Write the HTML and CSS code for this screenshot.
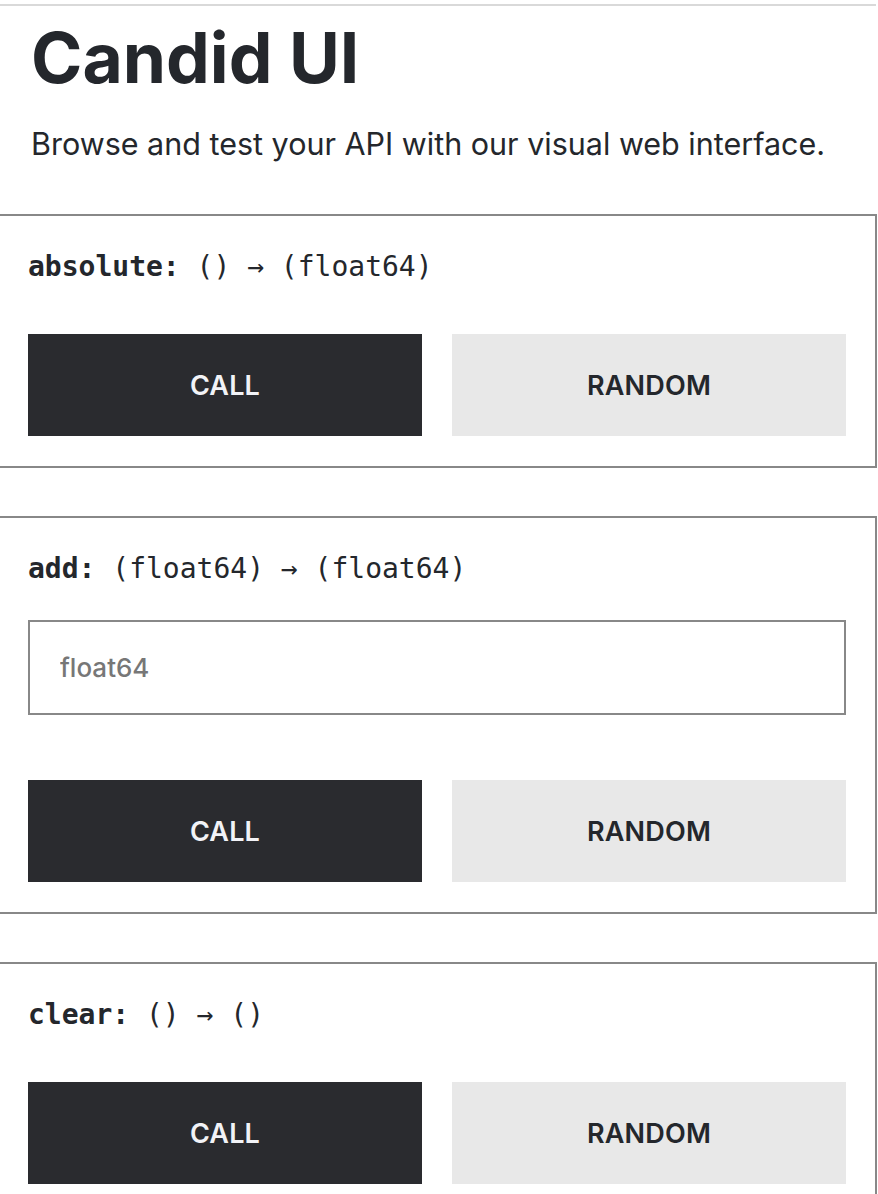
FILE: index.html
```html
<!DOCTYPE html>
<html lang="en">
<head>
<meta charset="utf-8">
<title>Candid UI</title>
<link rel="stylesheet" href="styles.css">
</head>
<body>
<div class="topline"></div>
<header class="header">
  <h1 class="title">Candid UI</h1>
  <p class="subtitle">Browse and test your API with our visual web interface.</p>
</header>
<main class="methods">
  <section class="card">
    <div class="signature"><span class="name">absolute:</span> () → (float64)</div>
    <div class="actions">
      <button class="btn btn-call">CALL</button>
      <button class="btn btn-random">RANDOM</button>
    </div>
  </section>
  <section class="card">
    <div class="signature"><span class="name">add:</span> (float64) → (float64)</div>
    <input class="arg" type="text" placeholder="float64">
    <div class="actions">
      <button class="btn btn-call">CALL</button>
      <button class="btn btn-random">RANDOM</button>
    </div>
  </section>
  <section class="card">
    <div class="signature"><span class="name">clear:</span> () → ()</div>
    <div class="actions">
      <button class="btn btn-call">CALL</button>
      <button class="btn btn-random">RANDOM</button>
    </div>
  </section>
</main>
</body>
</html>
```
FILE: styles.css
```css
* { box-sizing: border-box; }
html, body { margin: 0; padding: 0; background: #fff; }
body {
  font-family: Inter, "Liberation Sans", sans-serif;
  color: #24272c;
  width: 878px;
  overflow: hidden;
}
.topline {
  margin-top: 4px;
  width: 876px;
  height: 2px;
  background: #d9d9d9;
}
.header { padding-left: 31px; }
.title {
  margin: 12px 0 0;
  font-size: 69.5px;
  line-height: 80px;
  font-weight: 700;
  letter-spacing: 0;
}
.subtitle {
  margin: 26px 0 0;
  font-size: 30.5px;
  line-height: 40px;
  font-weight: 400;
}
.methods {
  margin-top: 50px;
  margin-left: -2px;
}
.card {
  width: 879px;
  border: 2px solid #888;
  padding: 34px 29px 30px 28px;
  margin-bottom: 48px;
}
.signature {
  font-family: "DejaVu Sans Mono", monospace;
  font-size: 28px;
  line-height: 34px;
  color: #24272c;
}
.name { font-weight: 700; }
.arg {
  display: block;
  width: 818px;
  height: 95px;
  margin-top: 34px;
  border: 2px solid #888;
  padding: 0 30px;
  font-family: Inter, "Liberation Sans", sans-serif;
  font-size: 26px;
  font-weight: 500;
  color: #24272c;
  outline: none;
}
.arg::placeholder { color: #777; }
.actions {
  display: flex;
  gap: 30px;
  margin-top: 50px;
}
.arg + .actions { margin-top: 65px; }
.btn {
  flex: 1;
  height: 102px;
  border: none;
  border-radius: 0;
  font-family: Inter, "Liberation Sans", sans-serif;
  font-size: 27px;
  font-weight: 600;
  letter-spacing: 0.2px;
  cursor: pointer;
}
.btn-call { background: #2a2b2f; color: #f2f3f7; }
.btn-random { background: #e8e8e8; color: #24272c; }
```
